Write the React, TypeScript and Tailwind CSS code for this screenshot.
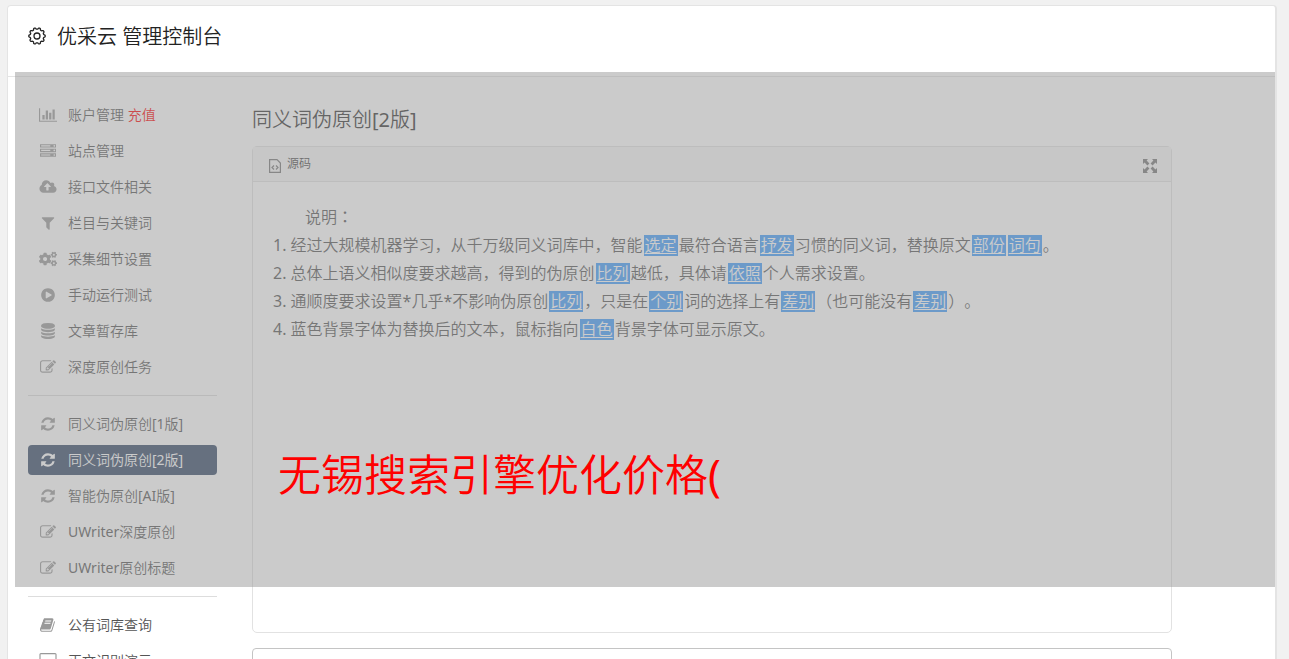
import type { ReactNode } from "react";
import { FaCogs } from "react-icons/fa";

const paths = {
  chart:
    "M640 896v512h-256v-512h256zm384-512v1024h-256v-1024h256zm1024 1152v128h-2048v-1536h128v1408h1920zm-640-896v768h-256v-768h256zm384-384v1152h-256v-1152h256z",
  server:
    "M128 1408h1024v-128h-1024v128zm0-512h1024v-128h-1024v128zm1568 448q0-40-28-68t-68-28-68 28-28 68 28 68 68 28 68-28 28-68zm-1568-960h1024v-128h-1024v128zm1568 448q0-40-28-68t-68-28-68 28-28 68 28 68 68 28 68-28 28-68zm0-512q0-40-28-68t-68-28-68 28-28 68 28 68 68 28 68-28 28-68zm96 832v384h-1792v-384h1792zm0-512v384h-1792v-384h1792zm0-512v384h-1792v-384h1792z",
  cloud:
    "M1280 864q0-14-9-23l-352-352q-9-9-23-9t-23 9l-351 351q-10 12-10 24 0 14 9 23t23 9h224v352q0 13 9.5 22.5t22.5 9.5h192q13 0 22.5-9.5t9.5-22.5v-352h224q13 0 22.5-9.5t9.5-22.5zm640 288q0 159-112.5 271.5t-271.5 112.5h-1088q-185 0-316.5-131.5t-131.5-316.5q0-130 70-240t188-165q-2-30-2-43 0-212 150-362t362-150q156 0 285.5 87t188.5 231q71-62 166-62 106 0 181 75t75 181q0 76-41 138 130 31 213.5 135.5t83.5 238.5z",
  filter:
    "M1595 295q17 41-14 70l-493 493v742q0 42-39 59-13 5-25 5-27 0-45-19l-256-256q-19-19-19-45v-486l-493-493q-31-29-14-70 17-39 59-39h1280q42 0 59 39z",
  play: "M896 128q209 0 385.5 103t279.5 279.5 103 385.5-103 385.5-279.5 279.5-385.5 103-385.5-103-279.5-279.5-103-385.5 103-385.5 279.5-279.5 385.5-103zm384 823q32-18 32-55t-32-55l-544-320q-31-19-64-1-32 19-32 56v640q0 37 32 56 16 8 32 8 17 0 32-9z",
  database:
    "M896 768q237 0 443-43t325-127v170q0 69-103 128t-280 93.5-385 34.5-385-34.5-280-93.5-103-128v-170q119 84 325 127t443 43zm0 768q237 0 443-43t325-127v170q0 69-103 128t-280 93.5-385 34.5-385-34.5-280-93.5-103-128v-170q119 84 325 127t443 43zm0-384q237 0 443-43t325-127v170q0 69-103 128t-280 93.5-385 34.5-385-34.5-280-93.5-103-128v-170q119 84 325 127t443 43zm0-1152q208 0 385 34.5t280 93.5 103 128v128q0 69-103 128t-280 93.5-385 34.5-385-34.5-280-93.5-103-128v-128q0-69 103-128t280-93.5 385-34.5z",
  edit: "M888 1184l116-116-152-152-116 116v56h96v96h56zm440-720q-16-16-33 1l-350 350q-17 17-1 33t33-1l350-350q17-17 1-33zm80 594v190q0 119-84.5 203.5t-203.5 84.5h-832q-119 0-203.5-84.5t-84.5-203.5v-832q0-119 84.5-203.5t203.5-84.5h832q63 0 117 25 15 7 18 23 3 17-9 29l-49 49q-14 14-32 8-23-6-45-6h-832q-66 0-113 47t-47 113v832q0 66 47 113t113 47h832q66 0 113-47t47-113v-126q0-13 9-22l64-64q15-15 35-7t20 29zm-96-738l288 288-672 672h-288v-288zm444 132l-92 92-288-288 92-92q28-28 68-28t68 28l152 152q28 28 28 68t-28 68z",
  refresh:
    "M1639 1056q0 5-1 7-64 268-268 434.5t-478 166.5q-146 0-282.5-55t-243.5-157l-129 129q-19 19-45 19t-45-19-19-45v-448q0-26 19-45t45-19h448q26 0 45 19t19 45-19 45l-137 137q71 66 161 102t187 36q134 0 250-65t186-179q11-17 53-117 8-23 30-23h192q13 0 22.5 9.5t9.5 22.5zm25-800v448q0 26-19 45t-45 19h-448q-26 0-45-19t-19-45 19-45l138-138q-148-137-349-137-134 0-250 65t-186 179q-11 17-53 117-8 23-30 23h-199q-13 0-22.5-9.5t-9.5-22.5v-7q65-268 270-434.5t480-166.5q146 0 284 55.5t245 156.5l130-129q19-19 45-19t45 19 19 45z",
  book: "M1639 478q40 57 18 129l-275 906q-19 64-76.5 107.5t-122.5 43.5h-923q-77 0-148.5-53.5t-99.5-131.5q-24-67-2-127 0-4 3-27t4-37q1-8-3-21.5t-3-19.5q2-11 8-21t16.5-23.5 16.5-23.5q23-38 45-91.5t30-91.5q3-10 .5-30t-.5-28q3-11 17-28t17-23q21-36 42-92t25-90q1-9-2.5-32t.5-28q4-13 22-30.5t22-22.5q19-26 42.5-84.5t27.5-96.5q1-8-3-25.5t-2-26.5q2-8 9-18t18-23 17-21q8-12 16.5-30.5t15-35 16-36 19.5-32 26.5-23.5 36-11.5 47.5 5.5l-1 3q38-9 51-9h761q74 0 114 56t18 130l-274 906q-36 119-71.5 153.5t-128.5 34.5h-869q-27 0-38 15-11 16-1 43 24 70 144 70h923q29 0 56-15.5t35-41.5l300-987q7-22 5-57 38 15 59 43zm-1064 2q-4 13 2 22.5t20 9.5h608q13 0 25.5-9.5t16.5-22.5l21-64q4-13-2-22.5t-20-9.5h-608q-13 0-25.5 9.5t-16.5 22.5zm-83 256q-4 13 2 22.5t20 9.5h608q13 0 25.5-9.5t16.5-22.5l21-64q4-13-2-22.5t-20-9.5h-608q-13 0-25.5 9.5t-16.5 22.5z",
  desktop:
    "M1792 992v-832q0-13-9.5-22.5t-22.5-9.5h-1600q-13 0-22.5 9.5t-9.5 22.5v832q0 13 9.5 22.5t22.5 9.5h1600q13 0 22.5-9.5t9.5-22.5zm128-832v1088q0 66-47 113t-113 47h-544q0 37 16 77.5t32 71 16 43.5q0 26-19 45t-45 19h-512q-26 0-45-19t-19-45q0-14 16-44t32-70 16-78h-544q-66 0-113-47t-47-113v-1088q0-66 47-113t113-47h1600q66 0 113 47t47 113z",
};

type IconName = keyof typeof paths | "cogs";
type Item = { icon: IconName; label: string; note?: string; active?: boolean };

const wide: Partial<Record<IconName, number>> = { chart: 2048, cloud: 1920, desktop: 1920 };

function Icon({ name }: { name: IconName }) {
  if (name === "cogs") return <FaCogs className="h-4 w-[18px]" />;
  return (
    <svg viewBox={`0 0 ${wide[name] ?? 1792} 1792`} className="h-4 w-[18px]" fill="currentColor" aria-hidden="true">
      <path d={paths[name]} />
    </svg>
  );
}

/* Closed outline of a cog with ten rounded teeth, centred on 9,9. */
const cogOutline = (() => {
  const points = Array.from({ length: 120 }, (_, i) => {
    const a = (i / 120) * Math.PI * 2;
    const wave = Math.cos(a * 10 + Math.PI);
    const r = 7.5 + 0.75 * Math.tanh(wave * 2);
    return `${(9 + r * Math.sin(a)).toFixed(2)} ${(9 - r * Math.cos(a)).toFixed(2)}`;
  });
  return `M${points.join("L")}Z`;
})();

const groups: Item[][] = [
  [
    { icon: "chart", label: "账户管理", note: "充值" },
    { icon: "server", label: "站点管理" },
    { icon: "cloud", label: "接口文件相关" },
    { icon: "filter", label: "栏目与关键词" },
    { icon: "cogs", label: "采集细节设置" },
    { icon: "play", label: "手动运行测试" },
    { icon: "database", label: "文章暂存库" },
    { icon: "edit", label: "深度原创任务" },
  ],
  [
    { icon: "refresh", label: "同义词伪原创[1版]" },
    { icon: "refresh", label: "同义词伪原创[2版]", active: true },
    { icon: "refresh", label: "智能伪原创[AI版]" },
    { icon: "edit", label: "UWriter深度原创" },
    { icon: "edit", label: "UWriter原创标题" },
  ],
  [
    { icon: "book", label: "公有词库查询" },
    { icon: "desktop", label: "正文识别演示" },
  ],
];

function NavItem({ item }: { item: Item }) {
  return (
    <li>
      <a
        href="#"
        aria-current={item.active ? "page" : undefined}
        className={`flex h-[30px] items-center gap-[10px] rounded-[4px] px-[10px] text-sm ${
          item.active ? "bg-[#354967] text-white" : "text-[#555]"
        }`}
      >
        <span className={`flex w-5 justify-center ${item.active ? "text-white" : "text-[#999]"}`}>
          <Icon name={item.icon} />
        </span>
        <span>
          {item.label}
          {item.note && <span className="text-[#f00]"> {item.note}</span>}
        </span>
      </a>
    </li>
  );
}

function Mark({ children }: { children: ReactNode }) {
  return (
    <span className="mx-px inline-block h-[21px] bg-[#419dfb] px-px align-text-bottom leading-[21px] text-white underline underline-offset-2">
      {children}
    </span>
  );
}

export default function App() {
  return (
    <div className="h-screen overflow-hidden bg-[#f1f1f1] pt-[5px] pr-3 pl-[7px] font-['Noto_Sans','Noto_Sans_CJK_SC_DemiLight','Noto_Sans_CJK_SC',sans-serif] font-normal text-[#555] [text-spacing-trim:space-all]">
      <div className="relative min-h-full rounded-t-[4px] border border-r-2 border-[#e4e4e4] bg-white">
        <header className="flex h-[71px] items-center gap-[11px] border-b border-[#e4e4e4] px-5 pb-2 text-[#222]">
          <svg viewBox="0 0 18 18" className="mb-[3px] h-[18px] w-[18px]" fill="none" stroke="currentColor" strokeWidth="1.300" aria-hidden="true">
            <path d={cogOutline} />
            <circle cx="9" cy="9" r="3" />
          </svg>
          <h1 className="text-xl">优采云 管理控制台</h1>
        </header>

        <div className="flex">
          <nav className="w-[209px] shrink-0 pt-[23px] pl-5">
            {groups.map((group, i) => (
              <ul
                key={i}
                className={`flex flex-col gap-[6px] ${i > 0 ? "mt-[13px] border-t border-[#ddd] pt-[13px]" : ""}`}
              >
                {group.map((item) => (
                  <NavItem key={item.label} item={item} />
                ))}
              </ul>
            ))}
          </nav>

          <main className="min-w-0 flex-1 pt-7 pr-[103px] pl-[35px]">
            <h2 className="text-xl leading-[30px] text-[#333]">同义词伪原创[2版]</h2>
            <section className="mt-[11px] h-[487px] rounded-[5px] border border-[#e2e2e2]">
              <div className="flex h-[35px] items-center justify-between border-b border-[#e2e2e2] bg-[#f6f6f6] pr-[14px] pl-4">
                <button type="button" className="flex items-center gap-[6px] text-xs text-[#444]">
                  <svg viewBox="0 0 12 14" className="mt-[3px] h-[14px] w-3 text-[#777]" fill="none" stroke="currentColor" strokeWidth="1.200" aria-hidden="true">
                    <path d="M.6.6H8L11.400 4V13.400H.6Z" />
                    <path d="M5 6.500 3 8.500 5 10.500M7 6.500 9 8.500 7 10.500" />
                  </svg>
                  源码
                </button>
                <button type="button" aria-label="全屏" className="mt-1 text-[#777]">
                  <svg viewBox="0 0 14 14" className="h-[14px] w-[14px]" fill="currentColor" aria-hidden="true">
                    <path d="M0 0H5L3.600 1.600 6.400 4.400 4.400 6.400 1.600 3.600 0 5ZM14 0V5L12.400 3.600 9.600 6.400 7.600 4.400 10.400 1.600 9 0ZM0 14V9L1.600 10.400 4.400 7.600 6.400 9.600 3.600 12.400 5 14ZM14 14H9L10.400 12.400 7.600 9.600 9.600 7.600 12.400 10.400 14 9Z" />
                  </svg>
                </button>
              </div>
              <div className="px-5 pt-5 text-base leading-7">
                <p className="indent-8">
                  说明<span className="font-['Noto_Sans_CJK_TC',sans-serif]">：</span>
                </p>
                <p>
                  1. 经过大规模机器学习，从千万级同义词库中，智能<Mark>选定</Mark>最符合语言<Mark>抒发</Mark>
                  习惯的同义词，替换原文<Mark>部份</Mark>
                  <Mark>词句</Mark>。
                </p>
                <p>
                  2. 总体上语义相似度要求越高，得到的伪原创<Mark>比列</Mark>越低，具体请<Mark>依照</Mark>
                  个人需求设置。
                </p>
                <p>
                  3. 通顺度要求设置*几乎*不影响伪原创<Mark>比列</Mark>，只是在<Mark>个别</Mark>词的选择上有
                  <Mark>差别</Mark>（也可能没有<Mark>差别</Mark>）。
                </p>
                <p>
                  4. 蓝色背景字体为替换后的文本，鼠标指向<Mark>白色</Mark>背景字体可显示原文。
                </p>
              </div>
            </section>
            <section className="mt-[15px] h-20 rounded-[4px] border border-[#c4c4c4]" />
          </main>
        </div>

        <div className="pointer-events-none absolute top-[66px] right-0 left-[7px] flex h-[515px] items-end bg-[rgba(151,151,151,0.5)] px-[263px] pb-20">
          <p className="text-[43px] leading-[64px] whitespace-nowrap text-[#f00]">无锡搜索引擎优化价格(</p>
        </div>
      </div>
    </div>
  );
}
